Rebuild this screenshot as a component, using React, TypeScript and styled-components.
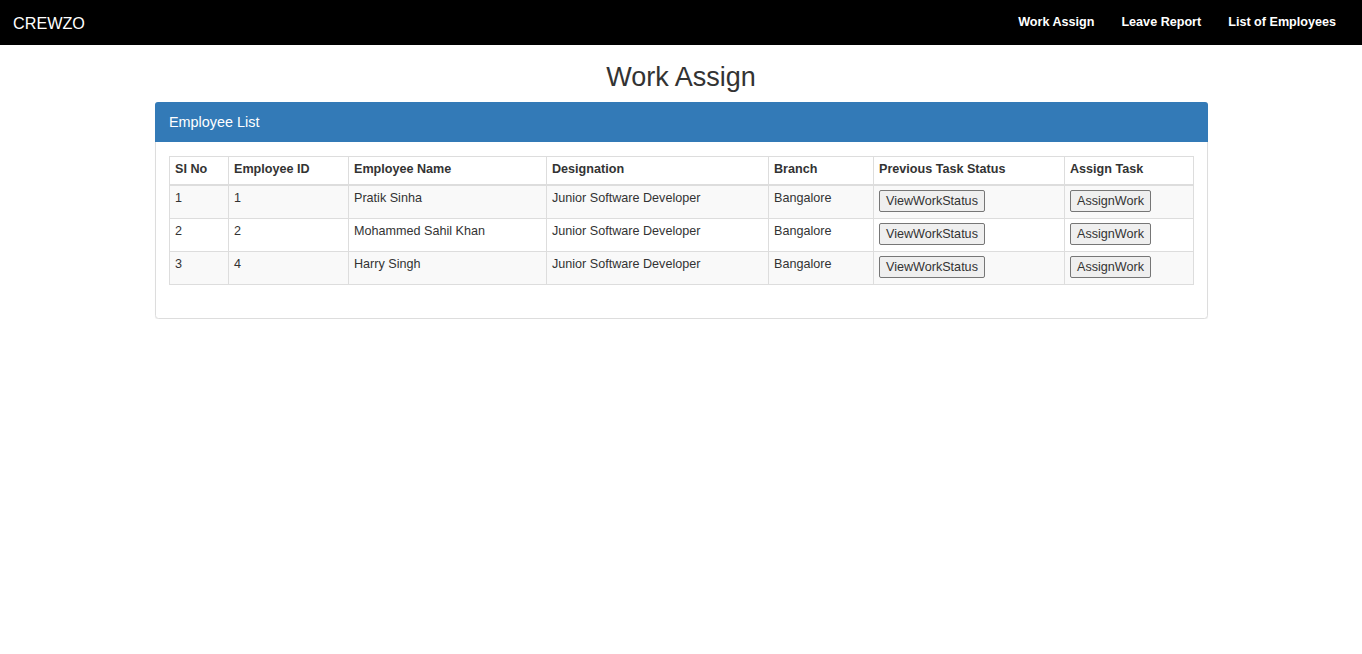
import styled, { createGlobalStyle } from "styled-components";

const GlobalStyle = createGlobalStyle`
  html, body {
    margin: 0;
    padding: 0;
    background: #fff;
  }
  body {
    font-family: "Liberation Sans", Arial, Helvetica, sans-serif;
    font-size: 12.6px;
    line-height: 18px;
    color: #333;
  }
  * { box-sizing: border-box; }
`

interface Employee {
  sl: number;
  id: number;
  name: string;
  designation: string;
  branch: string;
}

const employees: Employee[] = [
  { sl: 1, id: 1, name: "Pratik Sinha", designation: "Junior Software Developer", branch: "Bangalore" },
  { sl: 2, id: 2, name: "Mohammed Sahil Khan", designation: "Junior Software Developer", branch: "Bangalore" },
  { sl: 3, id: 4, name: "Harry Singh", designation: "Junior Software Developer", branch: "Bangalore" },
]

const columns = [
  { label: "SI No", width: 59 },
  { label: "Employee ID", width: 120 },
  { label: "Employee Name", width: 198 },
  { label: "Designation", width: 222 },
  { label: "Branch", width: 105 },
  { label: "Previous Task Status", width: 191 },
  { label: "Assign Task", width: 129 },
]

const App = () => {
  return (
    <div>
      <GlobalStyle />
      <Navbar>
        <Brand>CREWZO</Brand>
        <NavLinks>
          <NavLink>Work Assign</NavLink>
          <NavLink>Leave Report</NavLink>
          <NavLink>List of Employees</NavLink>
        </NavLinks>
      </Navbar>
      <Title>Work Assign</Title>
      <Panel>
        <PanelHeading>Employee List</PanelHeading>
        <PanelBody>
          <Table>
            <colgroup>
              {columns.map((c) => (
                <col key={c.label} style={{ width: c.width }} />
              ))}
            </colgroup>
            <thead>
              <tr>
                {columns.map((c) => (
                  <Th key={c.label}>{c.label}</Th>
                ))}
              </tr>
            </thead>
            <tbody>
              {employees.map((e, i) => (
                <Row key={e.sl} $striped={i % 2 === 0}>
                  <Td>{e.sl}</Td>
                  <Td>{e.id}</Td>
                  <Td>{e.name}</Td>
                  <Td>{e.designation}</Td>
                  <Td>{e.branch}</Td>
                  <Td>
                    <ActionButton>ViewWorkStatus</ActionButton>
                  </Td>
                  <Td>
                    <ActionButton>AssignWork</ActionButton>
                  </Td>
                </Row>
              ))}
            </tbody>
          </Table>
        </PanelBody>
      </Panel>
    </div>
  )
}

export default App;

const Navbar = styled.nav`
  height: 45px;
  background-color: #000;
  display: flex;
  align-items: center;
  justify-content: space-between;
  padding: 0 13px;
`
const Brand = styled.a`
  color: #fff;
  font-size: 16.2px;
  line-height: 20px;
`
const NavLinks = styled.div`
  display: flex;
  align-items: center;
  height: 100%;
`
const NavLink = styled.a`
  color: #fff;
  font-weight: 700;
  font-size: 12.6px;
  line-height: 18px;
  padding: 0 13.5px;
  margin-top: -1px;
  &:last-child {
    padding-right: 13px;
  }
`
const Title = styled.h2`
  margin: 17px 0 10px;
  text-align: center;
  font-size: 27px;
  font-weight: 500;
  line-height: 30px;
  color: #333;
`
const Panel = styled.div`
  width: 1053px;
  margin: 0 auto;
  border: 1px solid #ddd;
  border-radius: 3.6px;
  box-shadow: 0 1px 1px rgba(0, 0, 0, 0.05);
  background: #fff;
`
const PanelHeading = styled.div`
  background-color: #337ab7;
  color: #fff;
  font-size: 14.4px;
  line-height: 20px;
  padding: 10px 14.5px 10px;
  margin: -1px -1px 0;
  border-radius: 3px 3px 0 0;
`
const PanelBody = styled.div`
  padding: 14px 13.5px 15px;
`
const Table = styled.table`
  width: 100%;
  table-layout: fixed;
  border-collapse: collapse;
  border: 1px solid #ddd;
  margin-bottom: 18px;
`
const Th = styled.th`
  text-align: left;
  font-weight: 700;
  padding: 3px 5px 6px;
  border: 1px solid #ddd;
  border-bottom: 2px solid #ddd;
  line-height: 18px;
  vertical-align: top;
`
const Row = styled.tr<{ $striped: boolean }>`
  background-color: ${(p) => (p.$striped ? "#f9f9f9" : "#fff")};
`
const Td = styled.td`
  padding: 3px 5px 6.5px;
  border: 1px solid #ddd;
  line-height: 18px;
  vertical-align: top;
`
const ActionButton = styled.button`
  font-family: inherit;
  font-size: 12.6px;
  line-height: 18px;
  color: #333;
  background-color: #efefef;
  border: 1px solid #767676;
  border-radius: 2px;
  padding: 1px 6px;
  margin-top: 0.5px;
  cursor: pointer;
`
